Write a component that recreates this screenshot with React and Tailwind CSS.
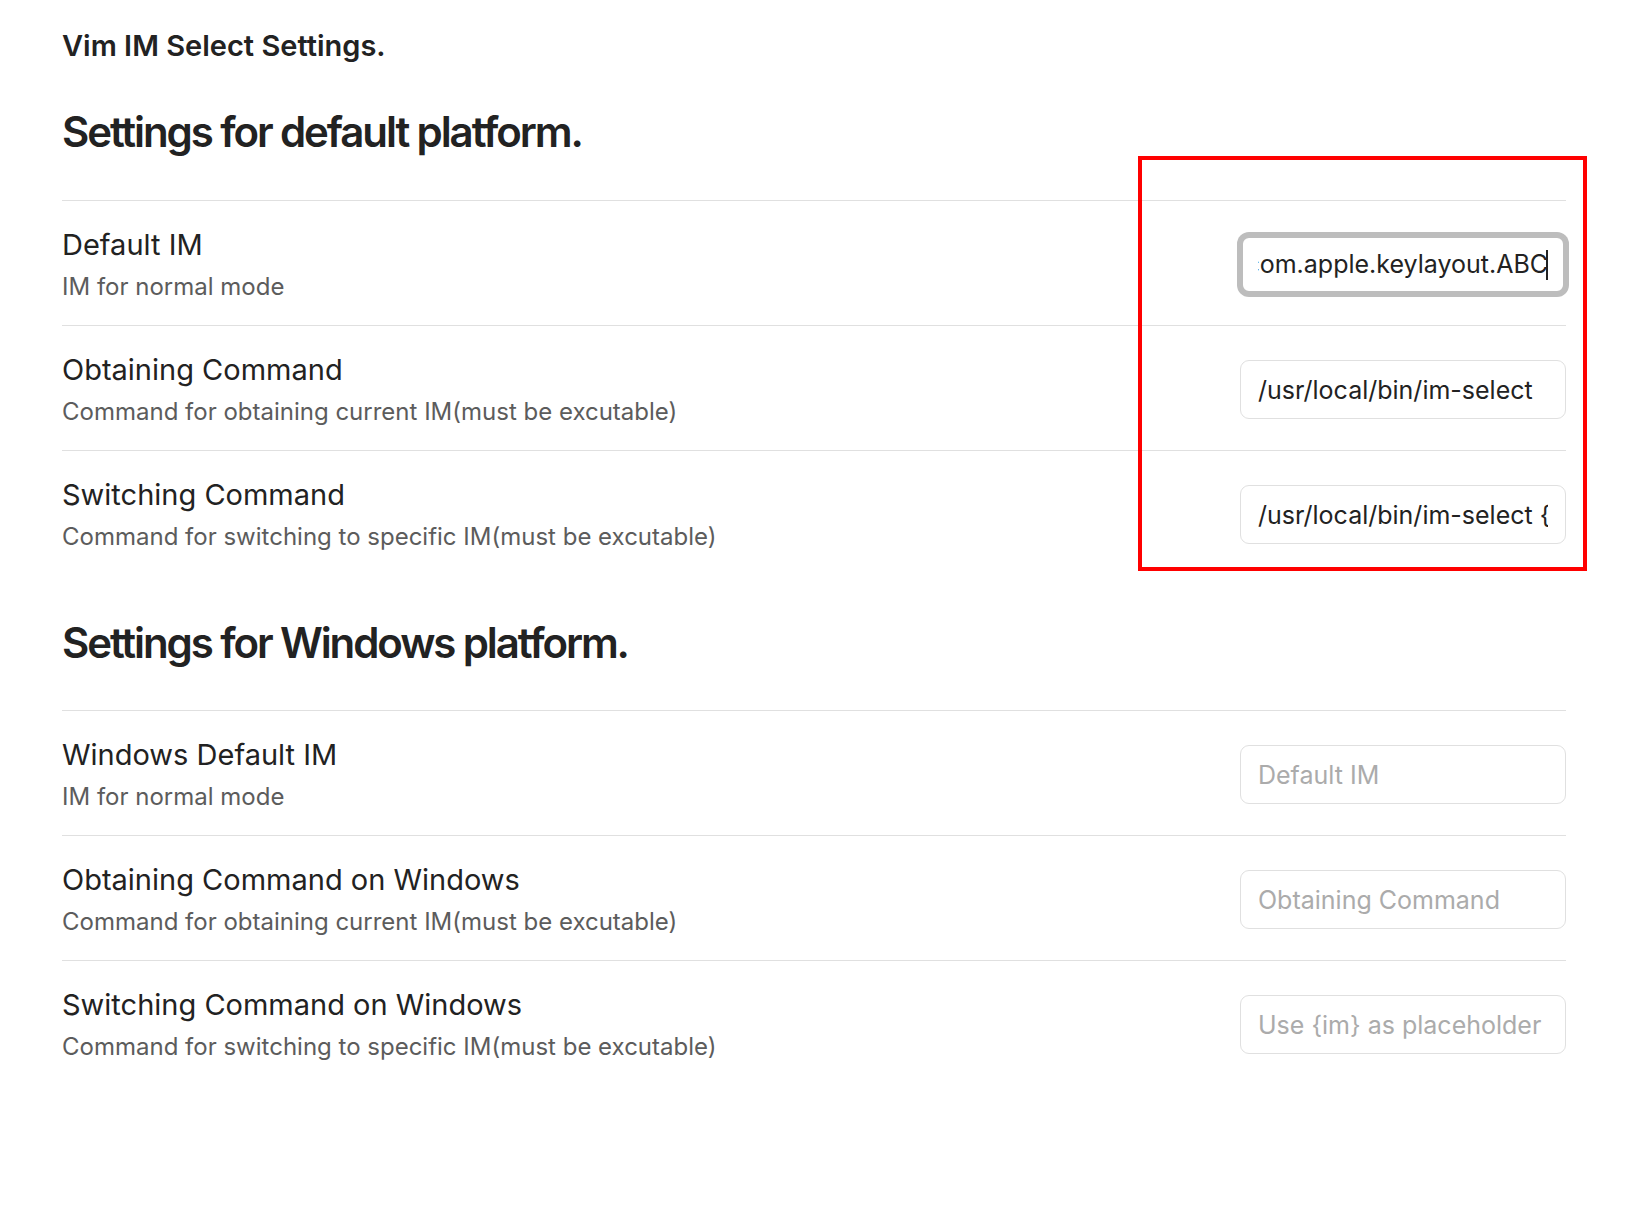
import React from 'react';

const defaultRows = [
  {
    name: 'Default IM',
    desc: 'IM for normal mode',
    value: 'com.apple.keylayout.ABC',
    focused: true,
  },
  {
    name: 'Obtaining Command',
    desc: 'Command for obtaining current IM(must be excutable)',
    value: '/usr/local/bin/im-select',
  },
  {
    name: 'Switching Command',
    desc: 'Command for switching to specific IM(must be excutable)',
    value: '/usr/local/bin/im-select {im}',
  },
];

const windowsRows = [
  {
    name: 'Windows Default IM',
    desc: 'IM for normal mode',
    placeholder: 'Default IM',
  },
  {
    name: 'Obtaining Command on Windows',
    desc: 'Command for obtaining current IM(must be excutable)',
    placeholder: 'Obtaining Command',
  },
  {
    name: 'Switching Command on Windows',
    desc: 'Command for switching to specific IM(must be excutable)',
    placeholder: 'Use {im} as placeholder',
  },
];

// focused text field, scrolled to the end with the caret showing
const FocusedField = ({ value }) => (
  <div className="box-border h-[59px] w-[326px] rounded-[9px] border-[3px] border-[#bdbdbd] bg-white px-[15px] shadow-[0_0_0_3px_#bdbdbd]">
    <div className="flex h-full items-center justify-end overflow-hidden whitespace-nowrap text-[25px] text-[#222222]">
      <span>{value}</span>
      <span className="-ml-[2px] inline-block h-[30px] w-[2px] shrink-0 bg-[#222222]" />
    </div>
  </div>
);

const SettingRow = ({ row }) => (
  <div className="flex h-[125px] items-center justify-between border-t border-[#e0e0e0] pt-[3px]">
    <div>
      <div className="text-[29px] leading-[36px] text-[#222222]">{row.name}</div>
      <div className="mt-[8px] text-[24px] leading-[32px] text-[#5c5c5c]">{row.desc}</div>
    </div>
    {row.focused ? (
      <FocusedField value={row.value} />
    ) : (
      <input
        type="text"
        defaultValue={row.value}
        placeholder={row.placeholder}
        spellCheck={false}
        className="box-border h-[59px] w-[326px] rounded-[9px] border border-[#e0e0e0] bg-white px-[17px] text-[25px] text-[#222222] outline-none placeholder:text-[#ababab]"
      />
    )}
  </div>
);

const Section = ({ title, rows, className, headingClass }) => (
  <div className={className}>
    <h2 className={`text-[42px] font-semibold leading-[52px] tracking-[-2.1px] text-[#222222] ${headingClass}`}>
      {title}
    </h2>
    <div>
      {rows.map(row => (
        <SettingRow key={row.name} row={row} />
      ))}
    </div>
  </div>
);

export default function App() {
  return (
    <div
      className="relative min-h-[1232px] bg-white pl-[62px] pr-[78px] pt-[28px]"
      style={{ fontFamily: 'Inter, "Noto Sans", "Liberation Sans", sans-serif' }}
    >
      <div className="text-[29px] font-semibold leading-[36px] text-[#222222]">Vim IM Select Settings.</div>

      <Section className="mt-[42px]" headingClass="mb-[42px]" title="Settings for default platform." rows={defaultRows} />
      <Section className="mt-[42px]" headingClass="mb-[41px]" title="Settings for Windows platform." rows={windowsRows} />

      {/* red highlight box drawn over the inputs */}
      <div className="pointer-events-none absolute left-[1138px] top-[156px] h-[415px] w-[449px] border-[4px] border-[#ff0000]" />
    </div>
  );
}
